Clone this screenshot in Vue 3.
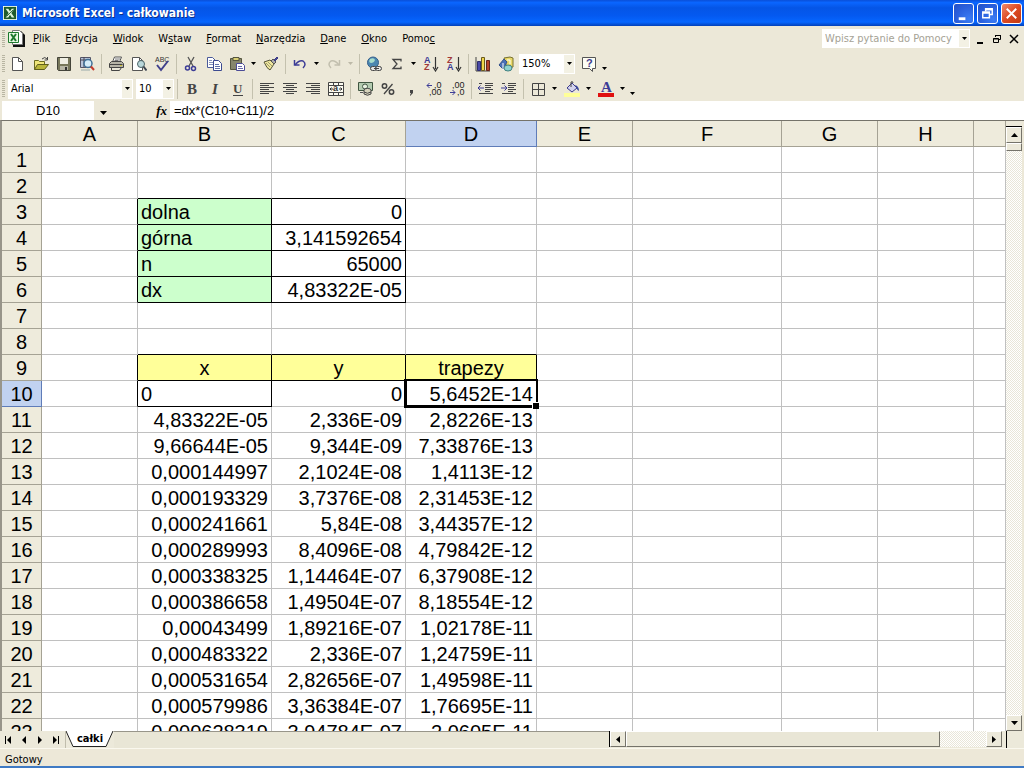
<script setup>
import { ref } from 'vue'

const menu = [
  ['', 'P', 'lik'],
  ['', 'E', 'dycja'],
  ['', 'W', 'idok'],
  ['W', 's', 'taw'],
  ['', 'F', 'ormat'],
  ['', 'N', 'arzędzia'],
  ['', 'D', 'ane'],
  ['', 'O', 'kno'],
  ['Pomo', 'c', ''],
]

const icons = {
  new: '<path d="M2.5 1.5h6l4 4v9h-10z" fill="#fff" stroke="#555"/><path d="M8.5 1.5v4h4" fill="none" stroke="#555"/>',
  open: '<path d="M1.5 13.5v-9h4l1 1h5v3" fill="#f0e67a" stroke="#6b6a20"/><path d="M1.5 13.5l3-5h11l-4 5z" fill="#b9b53a" stroke="#5f5e1c"/><path d="M9 3q3-3 5 0M14.5 1v3h-3" fill="none" stroke="#444"/>',
  save: '<path d="M1.5 1.5h13v13h-12l-1-1z" fill="#77775a" stroke="#44443a"/><path d="M4 2h8v6H4z" fill="#efeee2"/><path d="M4 10h8v4H4z" fill="#b8b7a6"/><path d="M9 11h2v3H9z" fill="#333"/>',
  search: '<path d="M1.5 1.5h10v10h-10z" fill="#b8c4d8" stroke="#556"/><path d="M1 4h10M5 1v10" stroke="#445"/><circle cx="9" cy="7.5" r="4" fill="#d5ecf8" stroke="#3f6f96" stroke-width="1.5"/><path d="M12 10.5l3 3.5" stroke="#c43b2c" stroke-width="2"/><path d="M2 14h9" stroke="#9aa"/>',
  print: '<path d="M4.5 6l2-5h7l-2 5z" fill="#fff" stroke="#555"/><path d="M7 3h5M6.5 4.5h4" stroke="#777"/><path d="M1.5 7.5l2-2h10l2 2v4h-14z" fill="#b5b3a6" stroke="#444"/><path d="M1.5 8.5h13" stroke="#444"/><path d="M3.5 11.5h10l-2 3h-8z" fill="#e9e7d8" stroke="#444"/><path d="M12 9.5h2" stroke="#c9bd2c"/>',
  preview: '<path d="M1.5 1.5h7l3 3v10h-10z" fill="#fff" stroke="#555"/><path d="M8.5 1.5v3h3" fill="none" stroke="#555"/><circle cx="10" cy="8" r="3.5" fill="#b9d7da" stroke="#4c6467"/><path d="M12.5 10.5l3 4" stroke="#3c4550" stroke-width="2"/>',
  spell: '<text x="1" y="6" font-size="7" font-family="Liberation Sans, sans-serif" fill="#333">ABC</text><path d="M3 9l4 5 7-9" fill="none" stroke="#40408c" stroke-width="2"/>',
  cut: '<path d="M5 1l5 9M11 1l-5 9" stroke="#555" stroke-width="1.3"/><circle cx="4.5" cy="12" r="2" fill="none" stroke="#3c3c96" stroke-width="1.5"/><circle cx="10.5" cy="12.5" r="2" fill="none" stroke="#3c3c96" stroke-width="1.5"/>',
  copy: '<path d="M1.5 1.5h5l3 3v7h-8z" fill="#fff" stroke="#4a5a9a"/><path d="M3 4.5h3M3 6.5h4M3 8.5h4" stroke="#8490b8"/><path d="M7.5 4.5h5l3 3v7h-8z" fill="#fff" stroke="#3c4a90"/><path d="M9 8.5h4M9 10.5h5M9 12.5h5" stroke="#6070a8"/>',
  paste: '<path d="M1.5 2.5h11v11h-11z" fill="#86866c" stroke="#55553f"/><path d="M4 1.5h6v3H4z" fill="#d9cf74" stroke="#55553f"/><path d="M7.5 7.5h6l2 2v5h-8z" fill="#fff" stroke="#4b4b96"/><path d="M9 10.5h4M9 12.5h5" stroke="#6a6aa8"/>',
  brush: '<path d="M1 6l6-2 4 4-4 6q-3-1-6-8z" fill="#efe69c" stroke="#55543a"/><path d="M3 7l4 4M5 6l4 4" stroke="#a09e70"/><path d="M8 5l2-2 3 3-2 2z" fill="#aaa" stroke="#555"/><path d="M11 4l3-3 1 1-3 3z" fill="#4a4a9c" stroke="#3b3b86"/>',
  undo: '<path d="M2.5 4v5h5" fill="none" stroke="#3c3c96" stroke-width="1.5"/><path d="M3 9q4-5 8-4 4 3 0 7" fill="none" stroke="#3c3c96" stroke-width="1.5"/>',
  redo: '<path d="M13.500 4v5h-5" fill="none" stroke="#c2bfae" stroke-width="1.5"/><path d="M13 9q-4-5-8-4-4 3 0 7" fill="none" stroke="#c2bfae" stroke-width="1.5"/>',
  link: '<circle cx="7" cy="6.5" r="5.5" fill="#4b86b0" stroke="#355f8c"/><path d="M4 3q4-2 5 1-1 3-4 3-3-1-1-4z" fill="#a8dccb"/><rect x="4.5" y="10.5" width="6" height="4" rx="2" fill="#e4e4e4" stroke="#444"/><rect x="9.5" y="10.5" width="6" height="4" rx="2" fill="#e4e4e4" stroke="#444"/><path d="M8 12.5h5" stroke="#444"/>',
  sum: '<path d="M12 5.5v-2H4l4 4.5-4 4.5h8v-2" fill="none" stroke="#444" stroke-width="1.3"/>',
  asc: '<text x="1" y="7" font-size="9" font-weight="bold" font-family="Liberation Sans, sans-serif" fill="#3c3c96">A</text><text x="1" y="14" font-size="9" font-weight="bold" font-family="Liberation Sans, sans-serif" fill="#a03838">Z</text><path d="M12.5 1v12M10 11l2.5 4 2.5-4" fill="none" stroke="#333" stroke-width="1.2"/>',
  desc: '<text x="1" y="7" font-size="9" font-weight="bold" font-family="Liberation Sans, sans-serif" fill="#a03838">Z</text><text x="1" y="14" font-size="9" font-weight="bold" font-family="Liberation Sans, sans-serif" fill="#3c3c96">A</text><path d="M12.5 1v12M10 11l2.5 4 2.5-4" fill="none" stroke="#333" stroke-width="1.2"/>',
  chart: '<path d="M1 1v14h14" fill="none" stroke="#444"/><path d="M2.5 5.5h3v9h-3z" fill="#4a4aa8" stroke="#2e2e6c"/><path d="M6.5 1.5h3v13h-3z" fill="#f0d64a" stroke="#6a5a1c"/><path d="M11.5 4.5h3v10h-3z" fill="#b5432c" stroke="#66261a"/>',
  drawing: '<path d="M6 2l6-1 3 1v9l-6 1z" fill="#e9d96a" stroke="#77702e"/><path d="M1 9l5-6 3 3-4 7z" fill="#4a72b8" stroke="#33508a"/><path d="M5 7v7" stroke="#fff"/><ellipse cx="10" cy="12" rx="4" ry="3" fill="#8fd3cf" stroke="#3f7f80"/><path d="M9 4h3v4" fill="none" stroke="#fff"/>',
  help: '<path d="M1.5 1.5h13v11h-3v3l-3-3h-7z" fill="#fdfdf4" stroke="#555"/><text x="5" y="11" font-size="11" font-weight="bold" font-family="Liberation Sans, sans-serif" fill="#3c3c8c">?</text>',
  bold: '<text x="3" y="13" font-size="15" font-weight="bold" font-family="Liberation Serif, serif" fill="#444">B</text>',
  italic: '<text x="5" y="13" font-size="15" font-weight="bold" font-style="italic" font-family="Liberation Serif, serif" fill="#444">I</text>',
  underline: '<text x="3" y="12" font-size="13" font-weight="bold" font-family="Liberation Serif, serif" fill="#444">U</text><path d="M3 14.5h10" stroke="#444"/>',
  left: '<path d="M1 2.5h14M1 4.5h9M1 6.5h14M1 8.5h9M1 10.5h14M1 12.5h9" stroke="#444"/>',
  center: '<path d="M1 2.5h14M4 4.5h8M1 6.5h14M4 8.5h8M1 10.5h14M4 12.5h8" stroke="#444"/>',
  right: '<path d="M1 2.5h14M6 4.5h9M1 6.5h14M6 8.5h9M1 10.5h14M6 12.5h9" stroke="#444"/>',
  merge: '<path d="M.5 1.5h15v13H.5zM.5 4.5h15M.5 11.5h15M5.5 1.5v3M10.5 1.5v3M5.5 11.5v3M10.5 11.5v3" fill="#fbfaf0" stroke="#444"/><path d="M2 8h3M14 8h-3M3.5 6.5L2 8l1.500 1.5M12.5 6.5L14 8l-1.500 1.5" fill="none" stroke="#333"/><text x="5" y="10" font-size="9" font-weight="bold" font-family="Liberation Sans, sans-serif" fill="#333">a</text>',
  currency: '<path d="M1.5 1.5h14v8h-14z" fill="#b4cbb0" stroke="#3f5540"/><circle cx="8" cy="5.5" r="2.5" fill="#eaf2e2" stroke="#3f5540"/><ellipse cx="10.5" cy="9" rx="3.5" ry="1.5" fill="#e2dfc8" stroke="#444"/><path d="M7 9v4q3.5 2.5 7 0V9M7 11q3.5 2.5 7 0" fill="#d5d2ba" stroke="#444"/><path d="M3 11.5h3" stroke="#555"/>',
  percent: '<circle cx="4.5" cy="5" r="2.2" fill="none" stroke="#444" stroke-width="1.5"/><circle cx="11.5" cy="11" r="2.2" fill="none" stroke="#444" stroke-width="1.5"/><path d="M12.5 3L4 13" stroke="#444" stroke-width="1.3"/>',
  comma: '<path d="M7 9h3v3l-3 3v-1l1-2H7z" fill="#444"/>',
  incdec: '<path d="M1 4.5h5M3.5 2L1 4.5 3.5 7" fill="none" stroke="#3c3c96"/><text x="8" y="7" font-size="9" font-family="Liberation Sans, sans-serif" fill="#222">,0</text><text x="3" y="14" font-size="9" font-family="Liberation Sans, sans-serif" fill="#222">,00</text>',
  decdec: '<text x="3" y="7" font-size="9" font-family="Liberation Sans, sans-serif" fill="#222">,00</text><path d="M1 11.5h5M3.5 9L6 11.5 3.5 14" fill="none" stroke="#3c3c96"/><text x="8" y="14" font-size="9" font-family="Liberation Sans, sans-serif" fill="#222">,0</text>',
  outdent: '<path d="M1 2.5h3M7 2.5h8M7 4.5h8M7 6.5h6M7 8.5h8M7 10.5h5M1 12.5h14" stroke="#444"/><path d="M0 7h6M2.5 4.5L0 7l2.5 2.5" fill="none" stroke="#3c3c96"/>',
  indent: '<path d="M1 2.5h3M7 2.5h8M7 4.5h8M7 6.5h6M7 8.5h8M7 10.5h5M1 12.5h14" stroke="#444"/><path d="M0 7h6M3.5 4.5L6 7 3.5 9.5" fill="none" stroke="#3c3c96"/>',
  borders: '<path d="M2.5 2.5h12v12h-12zM8.5 2.5v12M2.5 8.5h12" fill="none" stroke="#444"/>',
  fill: '<path d="M3 7l5-5 5 5-5 4z" fill="#d4d4ee" stroke="#3c3c8c"/><path d="M7 6V1q2-1 2 1" fill="none" stroke="#444"/><path d="M11 4q4 1 4 6-2-1-3-4z" fill="#3c4a9c"/><path d="M0 12h16v4H0z" fill="#ffff99"/>',
  font: '<text x="3" y="11" font-size="15" font-weight="bold" font-family="Liberation Serif, serif" fill="#3c3c96">A</text><path d="M0 12h16v4H0z" fill="#e01010"/>',
}

const standard = [
  ['new', 'Nowy'], ['open', 'Otwórz'], ['save', 'Zapisz'], ['search', 'Wyszukaj'], ['|'],
  ['print', 'Drukuj'], ['preview', 'Podgląd wydruku'], ['spell', 'Pisownia'], ['|'],
  ['cut', 'Wytnij'], ['copy', 'Kopiuj'], ['paste', 'Wklej'], ['v', 'Opcje wklejania'], ['brush', 'Malarz formatów'], ['|'],
  ['undo', 'Cofnij'], ['v', 'Lista cofania'], ['redo', 'Ponów'], ['v', 'Lista ponawiania', true], ['|'],
  ['link', 'Hiperłącze'], ['sum', 'Autosumowanie'], ['v', 'Funkcje'], ['asc', 'Sortuj rosnąco'], ['desc', 'Sortuj malejąco'], ['|'],
  ['chart', 'Kreator wykresów'], ['drawing', 'Rysowanie'],
]
const formatting = [
  ['bold', 'Pogrubienie'], ['italic', 'Kursywa'], ['underline', 'Podkreślenie'], ['|'],
  ['left', 'Do lewej'], ['center', 'Do środka'], ['right', 'Do prawej'], ['merge', 'Scal i wyśrodkuj'], ['|'],
  ['currency', 'Zapis walutowy'], ['percent', 'Zapis procentowy'], ['comma', 'Zapis dziesiętny'], ['incdec', 'Zwiększ dziesiętne'], ['decdec', 'Zmniejsz dziesiętne'], ['|'],
  ['outdent', 'Zmniejsz wcięcie'], ['indent', 'Zwiększ wcięcie'], ['|'],
  ['borders', 'Obramowanie'], ['v', 'Rodzaje obramowania'], ['fill', 'Kolor wypełnienia'], ['v', 'Kolory wypełnienia'], ['font', 'Kolor czcionki'], ['v', 'Kolory czcionki'],
]

const columns = ['A', 'B', 'C', 'D', 'E', 'F', 'G', 'H', '']
const data = {
  3: ['dolna', '0'],
  4: ['górna', '3,141592654'],
  5: ['n', '65000'],
  6: ['dx', '4,83322E-05'],
  9: ['x', 'y', 'trapezy'],
  10: ['0', '0', '5,6452E-14'],
  11: ['4,83322E-05', '2,336E-09', '2,8226E-13'],
  12: ['9,66644E-05', '9,344E-09', '7,33876E-13'],
  13: ['0,000144997', '2,1024E-08', '1,4113E-12'],
  14: ['0,000193329', '3,7376E-08', '2,31453E-12'],
  15: ['0,000241661', '5,84E-08', '3,44357E-12'],
  16: ['0,000289993', '8,4096E-08', '4,79842E-12'],
  17: ['0,000338325', '1,14464E-07', '6,37908E-12'],
  18: ['0,000386658', '1,49504E-07', '8,18554E-12'],
  19: ['0,00043499', '1,89216E-07', '1,02178E-11'],
  20: ['0,000483322', '2,336E-07', '1,24759E-11'],
  21: ['0,000531654', '2,82656E-07', '1,49598E-11'],
  22: ['0,000579986', '3,36384E-07', '1,76695E-11'],
  23: ['0,000628319', '3,94784E-07', '2,0605E-11'],
}
const value = (r, c) => (data[r] && c > 0 ? data[r][c - 1] : '') || ''
const boxed = (r, c) =>
  (r >= 3 && r <= 6 && (c === 1 || c === 2)) || (r === 9 && c >= 1 && c <= 3) || (r === 10 && c === 1)
const cellClass = (r, c) => ({
  edgeRight: boxed(r, c) || boxed(r, c + 1),
  edgeBottom: boxed(r, c) || boxed(r + 1, c),
  green: c === 1 && r >= 3 && r <= 6,
  yellow: r === 9 && c >= 1 && c <= 3,
  text: c === 1 && r <= 10 && r !== 9,
})

const family = ref('Arial')
const size = ref('10')
const zoom = ref('150%')
const formula = ref('=dx*(C10+C11)/2')
const cellName = ref('D10')
const question = ref('')
</script>

<template>
  <div class="app">
    <header class="title">
      <svg class="i16" viewBox="0 0 16 16" aria-hidden="true">
        <path d="M0 0h16v16H0z" fill="#f4fff0" /><path d="M1 1h14v14H1z" fill="#1d5a2c" />
        <path d="M3 3h3l2 3 2-3h3l-3.500 5 3.500 5h-3l-2-3-2 3H3l3.500-5z" fill="#dff5dc" />
        <path d="M4 12l8-8" stroke="#1d5a2c" />
      </svg>
      <h1>Microsoft Excel - całkowanie</h1>
      <button class="win" aria-label="Minimalizuj"><svg viewBox="0 0 20 20"><path d="M5 14h7v3H5z" fill="#fff" /></svg></button>
      <button class="win" aria-label="Przywróć w dół"><svg viewBox="0 0 20 20"><path d="M8 8V5h7v6h-3M8 6h7" fill="none" stroke="#fff" stroke-width="1.5" /><path d="M5 8.5h7v6H5zM5 9.5h7" fill="none" stroke="#fff" stroke-width="1.5" /></svg></button>
      <button class="win close" aria-label="Zamknij"><svg viewBox="0 0 20 20"><path d="M5 5l10 10M15 5L5 15" stroke="#fff" stroke-width="2" /></svg></button>
    </header>

    <nav class="bar menu">
      <span class="grip"></span>
      <svg class="doc" viewBox="0 0 17 17" aria-hidden="true">
        <path d="M5 1h8l4 4v12H5z" fill="#111" /><path d="M4.5.5h7l3 3v11h-10z" fill="#fff" stroke="#777" />
        <path d="M.5 2.5h10v10H.5z" fill="#e8f8e4" stroke="#1e7a2e" />
        <path d="M3 4l5 7M8 4l-5 7" stroke="#1e7a2e" stroke-width="2" />
      </svg>
      <button v-for="m in menu" :key="m.join('')" class="item">{{ m[0] }}<u>{{ m[1] }}</u>{{ m[2] }}</button>
      <span class="grow"></span>
      <div class="combo ask">
        <input v-model="question" aria-label="Pytanie do Pomocy" placeholder="Wpisz pytanie do Pomocy" />
        <button class="drop" aria-label="Lista pytań"><svg viewBox="0 0 5 3"><path d="M0 0h5L2.5 3z" /></svg></button>
      </div>
      <button class="mdi" aria-label="Minimalizuj okno"><svg viewBox="0 0 10 10"><path d="M2 8h6v2H2z" /></svg></button>
      <button class="mdi" aria-label="Przywróć okno"><svg viewBox="0 0 10 10"><path d="M3.5 3V1.5h5v4H7M3 1.5h6" fill="none" stroke="#000" /><path d="M1.5 4.5h5v4h-5zM1 5h6" fill="none" stroke="#000" /></svg></button>
      <button class="mdi" aria-label="Zamknij okno"><svg viewBox="0 0 10 10"><path d="M1 1l8 8M9 1L1 9" stroke="#000" stroke-width="1.5" /></svg></button>
    </nav>

    <div class="bar" role="toolbar" aria-label="Standardowy">
      <span class="grip"></span>
      <template v-for="(t, i) in standard" :key="i">
        <span v-if="t[0] === '|'" class="sep"></span>
        <button v-else-if="t[0] === 'v'" class="arrow" :class="{ dim: t[2] }" :aria-label="t[1]"><svg viewBox="0 0 5 3"><path d="M0 0h5L2.5 3z" /></svg></button>
        <button v-else class="tool" :aria-label="t[1]"><svg viewBox="0 0 16 16" v-html="icons[t[0]]"></svg></button>
      </template>
      <div class="combo zoom">
        <select v-model="zoom" aria-label="Powiększenie"><option>150%</option></select>
        <span class="drop"><svg viewBox="0 0 5 3"><path d="M0 0h5L2.5 3z" /></svg></span>
      </div>
      <button class="tool" aria-label="Pomoc"><svg viewBox="0 0 16 16" v-html="icons.help"></svg></button>
      <button class="arrow more" aria-label="Opcje paska"><svg viewBox="0 0 5 3"><path d="M0 0h5L2.5 3z" /></svg></button>
    </div>

    <div class="bar" role="toolbar" aria-label="Formatowanie">
      <span class="grip"></span>
      <div class="combo family">
        <select v-model="family" aria-label="Czcionka"><option>Arial</option></select>
        <span class="drop"><svg viewBox="0 0 5 3"><path d="M0 0h5L2.5 3z" /></svg></span>
      </div>
      <div class="combo size">
        <select v-model="size" aria-label="Rozmiar czcionki"><option>10</option></select>
        <span class="drop"><svg viewBox="0 0 5 3"><path d="M0 0h5L2.5 3z" /></svg></span>
      </div>
      <span class="sep"></span>
      <template v-for="(t, i) in formatting" :key="i">
        <span v-if="t[0] === '|'" class="sep"></span>
        <button v-else-if="t[0] === 'v'" class="arrow" :aria-label="t[1]"><svg viewBox="0 0 5 3"><path d="M0 0h5L2.5 3z" /></svg></button>
        <button v-else class="tool" :aria-label="t[1]"><svg viewBox="0 0 16 16" v-html="icons[t[0]]"></svg></button>
      </template>
      <button class="arrow more" aria-label="Opcje paska"><svg viewBox="0 0 5 3"><path d="M0 0h5L2.5 3z" /></svg></button>
    </div>

    <div class="formula">
      <input v-model="cellName" class="name" aria-label="Pole nazwy" />
      <button class="namedrop" aria-label="Lista nazw"><svg viewBox="0 0 7 4"><path d="M0 0h7L3.5 4z" /></svg></button>
      <button class="fx" aria-label="Wstaw funkcję">fx</button>
      <input v-model="formula" class="expr" aria-label="Pasek formuły" />
    </div>

    <main class="sheet">
      <div class="cells">
        <table>
          <colgroup>
            <col class="wr" /><col class="wa" /><col class="wb" /><col class="wb" /><col class="wd" />
            <col class="wa" /><col class="wf" /><col class="wa" /><col class="wa" /><col />
          </colgroup>
          <thead>
            <tr>
              <th></th>
              <th v-for="(c, i) in columns" :key="i" scope="col" :class="{ on: c === 'D' }">{{ c }}</th>
            </tr>
          </thead>
          <tbody>
            <tr v-for="r in 23" :key="r">
              <th scope="row" :class="{ on: r === 10 }">{{ r }}</th>
              <td v-for="(c, i) in columns" :key="i" :class="cellClass(r, i)">{{ value(r, i) }}<span v-if="r === 10 && i === 3" class="cursor"></span></td>
            </tr>
          </tbody>
        </table>
      </div>
      <div class="vscroll">
        <span class="split"></span>
        <button class="sb" aria-label="W górę"><svg viewBox="0 0 7 4"><path d="M0 4h7L3.5 0z" /></svg></button>
        <span class="vthumb"></span>
        <span class="grow"></span>
        <button class="sb" aria-label="W dół"><svg viewBox="0 0 7 4"><path d="M0 0h7L3.5 4z" /></svg></button>
      </div>
    </main>

    <div class="tabs">
      <div class="navs">
        <button aria-label="Pierwszy arkusz"><svg viewBox="0 0 8 8"><path d="M1 0h1v8H1zM7 0v8L3 4z" /></svg></button>
        <button aria-label="Poprzedni arkusz"><svg viewBox="0 0 8 8"><path d="M6 0v8L2 4z" /></svg></button>
        <button aria-label="Następny arkusz"><svg viewBox="0 0 8 8"><path d="M2 0v8l4-4z" /></svg></button>
        <button aria-label="Ostatni arkusz"><svg viewBox="0 0 8 8"><path d="M6 0h1v8H6zM1 0v8l4-4z" /></svg></button>
      </div>
      <button class="tab">
        <svg viewBox="0 0 48 16" aria-hidden="true"><path d="M0 0l7 15.5h33L47 0" fill="#fff" stroke="#222" /></svg>
        <span>całki</span>
      </button>
      <div class="rest"></div>
      <div class="hscroll">
        <button class="sb" aria-label="W lewo"><svg class="side" viewBox="0 0 4 7"><path d="M4 0v7L0 3.5z" /></svg></button>
        <span class="hthumb"></span>
        <span class="grow"></span>
        <button class="sb" aria-label="W prawo"><svg class="side" viewBox="0 0 4 7"><path d="M0 0v7l4-3.5z" /></svg></button>
      </div>
      <span class="corner"></span>
    </div>

    <footer class="status">Gotowy</footer>
  </div>
</template>

<style>
html,
body {
  margin: 0;
  background: #ece8d8;
}
</style>

<style scoped>
* {
  box-sizing: border-box;
}
.app {
  display: flex;
  flex-direction: column;
  height: 100vh;
  overflow: hidden;
  background: #ece8d8;
  color: #000;
  font: 11px/14px "DejaVu Sans Condensed", "DejaVu Sans", sans-serif;
}
button,
input,
select {
  margin: 0;
  padding: 0;
  border: 0;
  border-radius: 0;
  background: none;
  color: inherit;
  font: inherit;
  outline: 0;
  appearance: none;
}
.grow {
  flex: 1;
}
.title {
  flex: none;
  display: flex;
  align-items: center;
  gap: 2px;
  height: 26px;
  padding: 0 2px 0 3px;
  background: linear-gradient(#0a4fd8, #0a66ff 10%, #0555e6 30%, #0459f0 60%, #0666ff 85%, #0340b8);
}
.i16 {
  width: 14px;
  height: 14px;
}
h1 {
  flex: 1;
  margin: 0 0 0 3px;
  color: #fff;
  font: bold 12px/16px "DejaVu Sans Condensed", "DejaVu Sans", sans-serif;
  text-shadow: 1px 1px 0 #0a2f8a;
}
.win {
  width: 21px;
  height: 21px;
  border: 1px solid #fff;
  border-radius: 3px;
  background: radial-gradient(circle at 80% 80%, #3b7cf4, #2a5fdc 60%, #2450c4);
}
.win + .win {
  margin-left: 1px;
}
.win.close {
  background: linear-gradient(135deg, #ee8a6c, #dd4a22 50%, #c23a14);
}
.win svg {
  display: block;
  width: 19px;
  height: 19px;
}
.bar {
  flex: none;
  display: flex;
  align-items: center;
  height: 25px;
}
.menu {
  padding-right: 2px;
}
.grip {
  flex: none;
  width: 3px;
  height: 17px;
  margin: 0 1px 0 2px;
  background: repeating-linear-gradient(#b8b5a2 0 1px, #ece8d8 1px 2px);
}
.doc {
  width: 17px;
  height: 17px;
  margin: 0 1px 0 2px;
}
.item {
  padding: 0 8px 0 7px;
}
.combo {
  position: relative;
  display: flex;
  align-items: center;
  height: 20px;
  background: #fff;
}
.combo input,
.combo select {
  width: 100%;
  height: 100%;
  padding-left: 3px;
}
.combo .drop {
  position: absolute;
  inset: 1px 1px 1px auto;
  display: flex;
  align-items: center;
  justify-content: center;
  width: 10px;
  background: #f3f1e4;
  pointer-events: none;
}
.drop svg,
.arrow svg {
  width: 5px;
  height: 3px;
}
.ask {
  width: 148px;
  height: 19px;
  margin-right: 1px;
}
.ask ::placeholder {
  color: #a5a295;
  opacity: 1;
}
.mdi {
  width: 17px;
  height: 16px;
}
.mdi svg {
  display: block;
  width: 10px;
  height: 10px;
  margin: auto;
}
.tool {
  width: 23px;
  height: 22px;
}
.tool svg {
  display: block;
  width: 16px;
  height: 16px;
  margin: auto;
}
.arrow {
  display: flex;
  align-items: center;
  justify-content: center;
  width: 11px;
  height: 22px;
}
.arrow.dim {
  fill: #bdb9a8;
}
.arrow.more {
  width: 8px;
  padding-top: 10px;
}
.sep {
  width: 1px;
  height: 20px;
  margin: 0 2px 0 3px;
  background: #c4c1ae;
}
.zoom {
  width: 56px;
  margin: 0 2px;
}
.family {
  width: 125px;
  margin: 0 3px 0 2px;
}
.size {
  width: 38px;
}
.formula {
  flex: none;
  display: flex;
  height: 19px;
  font: 13px/17px "Liberation Sans", Arial, sans-serif;
}
.name {
  width: 92px;
  margin-left: 2px;
  background: #fff;
  text-align: center;
}
.namedrop {
  width: 18px;
}
.namedrop svg {
  width: 7px;
  height: 4px;
}
.fx {
  width: 58px;
  padding-right: 3px;
  font: italic bold 13px/17px "Liberation Serif", serif;
  text-align: right;
}
.expr {
  flex: 1;
  padding-left: 4px;
  background: #fff;
}
.sheet {
  flex: 1;
  display: flex;
  min-height: 0;
  padding-right: 2px;
  border-top: 1px solid #75736a;
  border-left: 2px solid #98958a;
}
.cells {
  flex: 1;
  min-width: 0;
  overflow: hidden;
  background: #fff;
}
table {
  width: 100%;
  table-layout: fixed;
  border-collapse: separate;
  border-spacing: 0;
  font: 20px/23px "Liberation Sans", Arial, sans-serif;
}
.wr {
  width: 40px;
}
.wa {
  width: 96px;
}
.wb {
  width: 134px;
}
.wd {
  width: 131px;
}
.wf {
  width: 149px;
}
th,
td {
  position: relative;
  height: 26px;
  padding: 2px 3px 0;
  border: solid #c0c0c0;
  border-width: 0 1px 1px 0;
  text-align: right;
  white-space: nowrap;
}
th {
  padding: 2px 0 0;
  border-color: #a5a294;
  background: #eeebdc;
  font-weight: normal;
  text-align: center;
}
th.on {
  border-color: #5f7cb8;
  background: #c1d2f0;
}
.edgeRight {
  border-right-color: #000;
}
.edgeBottom {
  border-bottom-color: #000;
}
.green {
  background: #ccffcc;
}
.yellow {
  background: #ffff99;
  text-align: center;
}
.text {
  text-align: left;
}
.cursor {
  position: absolute;
  z-index: 1;
  inset: -2px;
  border: solid #000;
  border-width: 2px 2px 3px 3px;
}
.cursor::after {
  content: "";
  position: absolute;
  right: -3px;
  bottom: -4px;
  width: 6px;
  height: 6px;
  border: solid #fff;
  border-width: 1px 0 0 1px;
  background: #000;
}
.vscroll {
  display: flex;
  flex-direction: column;
  width: 16px;
  background: repeating-conic-gradient(#e9e6d8 0 25%, #fff 0 50%) 0 0 / 2px 2px;
}
.sb {
  flex: none;
  display: flex;
  align-items: center;
  justify-content: center;
  width: 16px;
  height: 16px;
  border: 1px solid;
  border-color: #fff #75736a #75736a #fff;
  background: #ece9da;
}
.sb svg {
  width: 7px;
  height: 4px;
}
.sb .side {
  width: 4px;
  height: 7px;
}
.split {
  height: 6px;
  border-bottom: 1px solid #000;
  background: #ece9da;
}
.vthumb {
  height: 8px;
  border: 1px solid;
  border-color: #fff #75736a #75736a #fff;
  background: #ece9da;
}
.tabs {
  flex: none;
  display: flex;
  height: 17px;
  background: #ece9da;
}
.navs {
  display: flex;
  padding-right: 1px;
  border-right: 1px solid #c0bdac;
}
.navs button {
  width: 16px;
  height: 17px;
}
.navs svg {
  display: block;
  width: 8px;
  height: 8px;
  margin: auto;
}
.tab {
  position: relative;
  width: 48px;
  height: 16px;
  font-weight: bold;
}
.tab svg {
  position: absolute;
  inset: 0;
  width: 48px;
  height: 16px;
}
.tab span {
  position: relative;
}
.rest {
  flex: 1;
  border-top: 1px solid #98958a;
  background: #e9e6d6;
}
.hscroll {
  display: flex;
  width: 41%;
  max-width: 393px;
  height: 16px;
  border-left: 1px solid #000;
  background: repeating-conic-gradient(#e9e6d8 0 25%, #fff 0 50%) 0 0 / 2px 2px;
}
.hthumb {
  width: 80%;
  border: 1px solid;
  border-color: #fff #75736a #75736a #fff;
  background: #e9e6d6;
}
.corner {
  width: 16px;
  margin: 0 2px 0 4px;
  border-left: 1px solid #000;
}
.status {
  flex: none;
  height: 20px;
  padding: 4px 5px 0;
  border-top: 1px solid #faf8ee;
  border-bottom: 2px solid #3f7ac4;
  background: #ede8d8;
}
</style>
